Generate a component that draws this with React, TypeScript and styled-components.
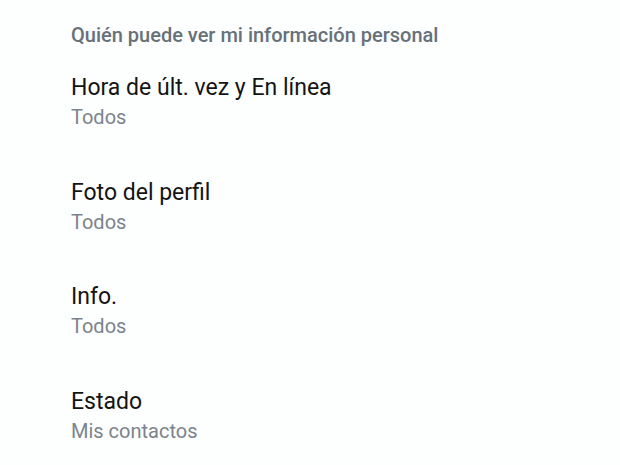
import React from "react";
import styled, { createGlobalStyle } from "styled-components";

const Global = createGlobalStyle`
  html, body { margin: 0; padding: 0; background: #fdfefe; }
  body { font-family: Roboto, "Noto Sans", sans-serif; }
`;

const Screen = styled.div`
  width: 620px;
  height: 465px;
  overflow: hidden;
  background: #fdfefe;
  display: flex;
  flex-direction: column;
`;

const TopDivider = styled.div`
  margin: 0 62px 0 65px;
  height: 2px;
  background: #eaf7ee;
`;

const Section = styled.section`
  display: flex;
  flex-direction: column;
  padding: 0 20px 0 71px;
`;

const SectionTitle = styled.h2`
  margin: 0;
  padding-top: 21px;
  font-size: 20px;
  font-weight: 500;
  line-height: 28px;
  color: #66717a;
`;

const List = styled.div`
  display: flex;
  flex-direction: column;
  padding-top: 24px;
`;

const Item = styled.div`
  display: flex;
  flex-direction: column;
  height: 104.5px;
`;

const ItemTitle = styled.div`
  font-size: 23px;
  line-height: 30px;
  color: #141414;
`;

const ItemValue = styled.div`
  font-size: 20px;
  line-height: 28px;
  color: #7b848b;
`;

const items = [
  { title: "Hora de últ. vez y En línea", value: "Todos" },
  { title: "Foto del perfil", value: "Todos" },
  { title: "Info.", value: "Todos" },
  { title: "Estado", value: "Mis contactos" },
];

export default function App() {
  return (
    <>
      <Global />
      <Screen>
        <TopDivider />
        <Section>
          <SectionTitle>Quién puede ver mi información personal</SectionTitle>
          <List>
            {items.map((it) => (
              <Item key={it.title}>
                <ItemTitle>{it.title}</ItemTitle>
                <ItemValue>{it.value}</ItemValue>
              </Item>
            ))}
          </List>
        </Section>
      </Screen>
    </>
  );
}
